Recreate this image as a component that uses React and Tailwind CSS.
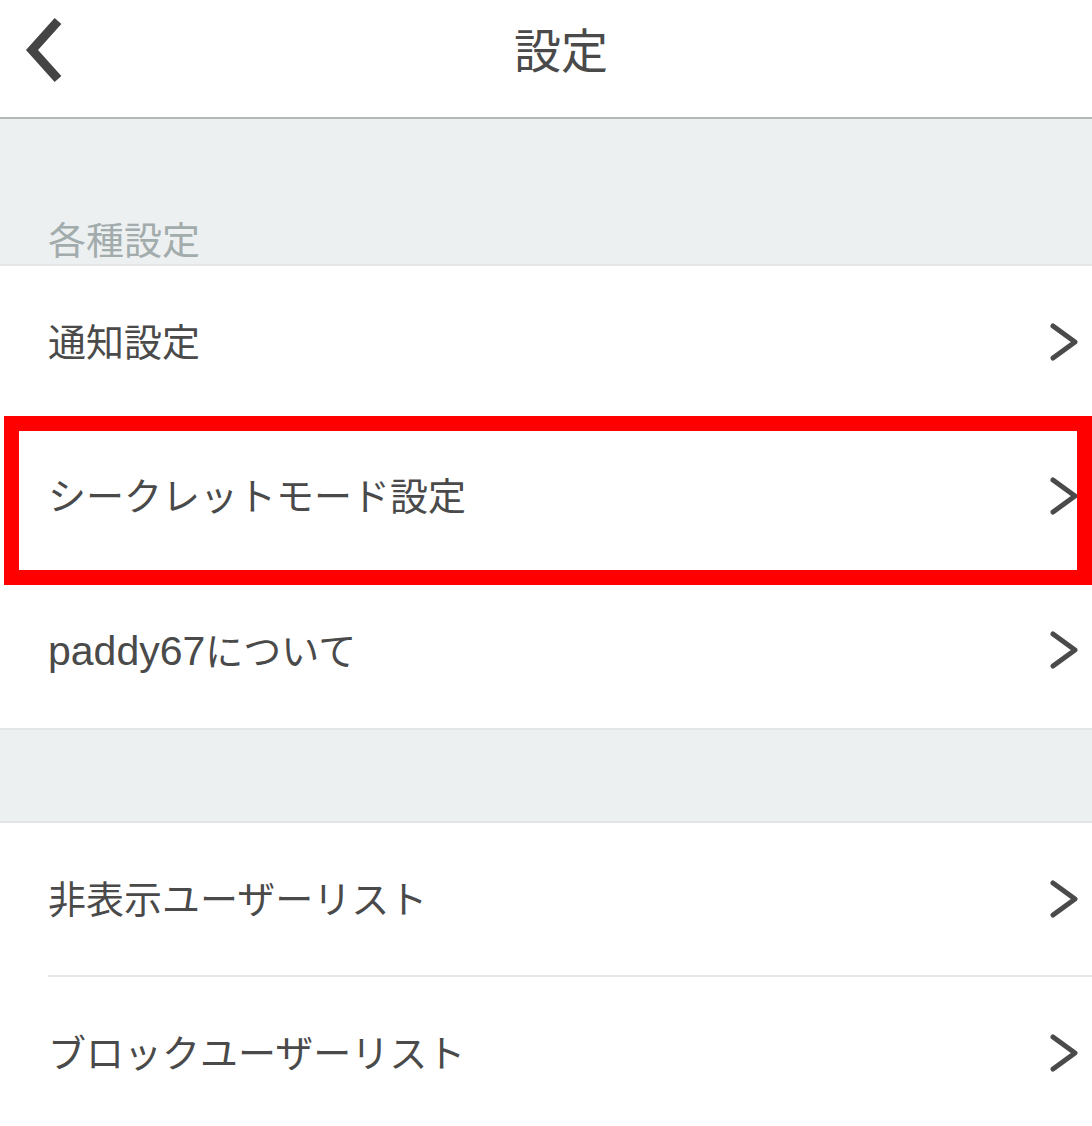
import React from "react";

const Chevron = () => (
  <svg width="30" height="40" viewBox="0 0 30 40" className="shrink-0">
    <path d="M5 3 L27 19 L5 35" fill="none" stroke="#4a4a4a" strokeWidth="5" strokeLinecap="round" strokeLinejoin="round" />
  </svg>
);

const Row = ({ label, children, divider }) => (
  <div className="relative h-[154px] flex items-center bg-white pl-[48px] pr-[14px]">
    <span className="flex-1 text-[38px] text-[#4a4a4a] leading-none">{label}</span>
    <Chevron />
    {divider && <div className="absolute bottom-0 left-[48px] right-0 h-[2px] bg-[#e6e8e8]" />}
    {children}
  </div>
);

export default function App() {
  return (
    <div
      className="w-[1092px] h-[1126px] overflow-hidden bg-white"
      style={{ fontFamily: '"Liberation Sans", "Noto Sans CJK JP", sans-serif' }}
    >
      <header className="relative h-[119px] flex items-center justify-center pl-[30px] border-b-[2px] border-[#b5b8b8] bg-white">
        <svg width="50" height="70" viewBox="0 0 50 70" className="absolute left-[18px] top-[15px]">
          <path d="M40 6 L14 35 L40 64" fill="none" stroke="#444444" strokeWidth="9" strokeLinecap="butt" strokeLinejoin="miter" />
        </svg>
        <h1 className="text-[47px] text-[#4a4a4a] leading-none -mt-[14px] font-normal">設定</h1>
      </header>
      <div className="h-[147px] bg-[#edf0f1] border-b-[2px] border-[#e4e6e6] flex items-end pl-[48px] pb-[4px]">
        <span className="text-[38px] text-[#a3acac] leading-none">各種設定</span>
      </div>
      <Row label="通知設定" />
      <Row label="シークレットモード設定">
        <div className="absolute z-10 left-[4px] right-0 top-[-4px] bottom-[-11px] border-[15px] border-[#ff0000] pointer-events-none" />
      </Row>
      <Row
        label={
          <>
            <span className="text-[41px]">paddy67</span>について
          </>
        }
      />
      <div className="h-[95px] bg-[#edf0f1] border-y-[2px] border-[#e4e6e6]" />
      <Row label="非表示ユーザーリスト" divider />
      <Row label="ブロックユーザーリスト" />
    </div>
  );
}
